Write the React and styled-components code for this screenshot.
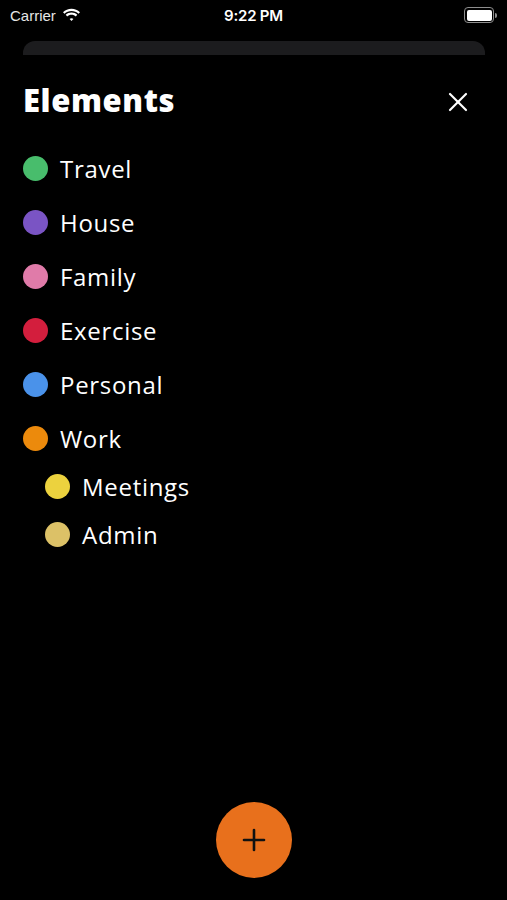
import React from "react";
import styled, { createGlobalStyle } from "styled-components";

const GlobalStyle = createGlobalStyle`
  html, body {
    margin: 0;
    padding: 0;
    background: #000;
  }
  body {
    font-family: "Open Sans", "Noto Sans", sans-serif;
    color: #fff;
  }
`;

const Screen = styled.div`
  width: 507px;
  height: 900px;
  background: #000;
  display: flex;
  flex-direction: column;
  overflow: hidden;
`;

const StatusBar = styled.div`
  height: 30px;
  padding: 0 10px;
  display: grid;
  grid-template-columns: 1fr auto 1fr;
  align-items: center;
  font-family: "Liberation Sans", sans-serif;
  font-size: 15px;
  color: #fff;
`;

const Carrier = styled.div`
  display: flex;
  align-items: center;
  gap: 6px;
  color: #e6e6e6;
`;

const Clock = styled.div`
  font-family: "Inter", "Liberation Sans", sans-serif;
  font-weight: 600;
  letter-spacing: -0.2px;
`;

const Battery = styled.div`
  justify-self: end;
  display: flex;
  align-items: center;
`;

const BatteryBody = styled.div`
  width: 25px;
  height: 11px;
  border: 1.5px solid #8e8e8e;
  border-radius: 4px;
  padding: 1.5px;
  box-sizing: content-box;
  display: flex;
`;

const BatteryFill = styled.div`
  flex: 1;
  background: #fff;
  border-radius: 2px;
`;

const BatteryCap = styled.div`
  width: 2px;
  height: 5px;
  background: #8e8e8e;
  border-radius: 0 2px 2px 0;
  margin-left: 1px;
`;

const BackSheet = styled.div`
  margin: 11px 22px 0 23px;
  height: 14px;
  background: #1c1c1e;
  border-radius: 12px 12px 0 0;
`;

const Sheet = styled.div`
  flex: 1;
  background: #000;
  display: flex;
  flex-direction: column;
  padding: 0 23px;
  position: relative;
`;

const Header = styled.div`
  display: flex;
  align-items: center;
  justify-content: space-between;
  height: 90px;
`;

const Title = styled.h1`
  margin: 0;
  font-size: 31px;
  font-weight: 800;
  letter-spacing: 0.6px;
  color: #fff;
`;

const CloseButton = styled.button`
  background: none;
  border: none;
  padding: 0;
  margin: 4px 14px 0 0;
  width: 24px;
  height: 24px;
  display: flex;
  align-items: center;
  justify-content: center;
  color: #fff;
`;

const List = styled.ul`
  list-style: none;
  margin: -4px 0 0;
  padding: 0;
`;

const SubList = styled.ul`
  list-style: none;
  margin: -3px 0 0;
  padding: 0 0 0 22px;
`;

const Row = styled.li`
  display: flex;
  align-items: center;
  gap: 12px;
  height: ${(p) => (p.$sub ? 48 : 54)}px;
`;

const Dot = styled.span`
  width: 25px;
  height: 25px;
  border-radius: 50%;
  background: ${(p) => p.$color};
  flex-shrink: 0;
`;

const Label = styled.span`
  font-size: 24px;
  font-weight: 400;
  color: #fff;
  letter-spacing: 0.7px;
`;

const Fab = styled.button`
  position: absolute;
  left: 216px;
  bottom: 22px;
  width: 76px;
  height: 76px;
  border-radius: 50%;
  border: none;
  background: #e8701c;
  display: flex;
  align-items: center;
  justify-content: center;
  padding: 0;
`;

const items = [
  { name: "Travel", color: "#48bd6c" },
  { name: "House", color: "#7a54c4" },
  { name: "Family", color: "#e07ba9" },
  { name: "Exercise", color: "#d31e3d" },
  { name: "Personal", color: "#4a92ea" },
  {
    name: "Work",
    color: "#ec8a0c",
    children: [
      { name: "Meetings", color: "#ecd23e" },
      { name: "Admin", color: "#dcc167" },
    ],
  },
];

function Wifi() {
  return (
    <svg width="19" height="14" viewBox="0 0 20 15" fill="#fff">
      <path d="M10 3.2c2.9 0 5.5 1.1 7.5 3l1.6-1.7C16.7 2.2 13.5 0.8 10 0.8S3.3 2.2 0.9 4.5l1.6 1.7c2-1.9 4.6-3 7.5-3z" />
      <path d="M10 7.2c1.8 0 3.4 0.7 4.6 1.8l1.6-1.7C14.6 5.8 12.4 4.9 10 4.9S5.4 5.8 3.8 7.3l1.6 1.7c1.2-1.1 2.8-1.8 4.6-1.8z" />
      <path d="M10 10.9c0.8 0 1.5 0.3 2 0.8L10 14l-2-2.3c0.5-0.5 1.2-0.8 2-0.8z" />
    </svg>
  );
}

export default function App() {
  return (
    <>
      <GlobalStyle />
      <Screen>
        <StatusBar>
          <Carrier>
            Carrier
            <Wifi />
          </Carrier>
          <Clock>9:22 PM</Clock>
          <Battery>
            <BatteryBody>
              <BatteryFill />
            </BatteryBody>
            <BatteryCap />
          </Battery>
        </StatusBar>
        <BackSheet />
        <Sheet>
          <Header>
            <Title>Elements</Title>
            <CloseButton aria-label="Close">
              <svg width="20" height="20" viewBox="0 0 20 20" stroke="#fff" strokeWidth="2.2" strokeLinecap="round">
                <line x1="2" y1="2" x2="18" y2="18" />
                <line x1="18" y1="2" x2="2" y2="18" />
              </svg>
            </CloseButton>
          </Header>
          <List>
            {items.map((it) => (
              <React.Fragment key={it.name}>
                <Row>
                  <Dot $color={it.color} />
                  <Label>{it.name}</Label>
                </Row>
                {it.children && (
                  <SubList>
                    {it.children.map((c) => (
                      <Row key={c.name} $sub>
                        <Dot $color={c.color} />
                        <Label>{c.name}</Label>
                      </Row>
                    ))}
                  </SubList>
                )}
              </React.Fragment>
            ))}
          </List>
          <Fab aria-label="Add">
            <svg width="24" height="24" viewBox="0 0 24 24" stroke="#111" strokeWidth="2.6" strokeLinecap="round">
              <line x1="12" y1="2" x2="12" y2="22" />
              <line x1="2" y1="12" x2="22" y2="12" />
            </svg>
          </Fab>
        </Sheet>
      </Screen>
    </>
  );
}
